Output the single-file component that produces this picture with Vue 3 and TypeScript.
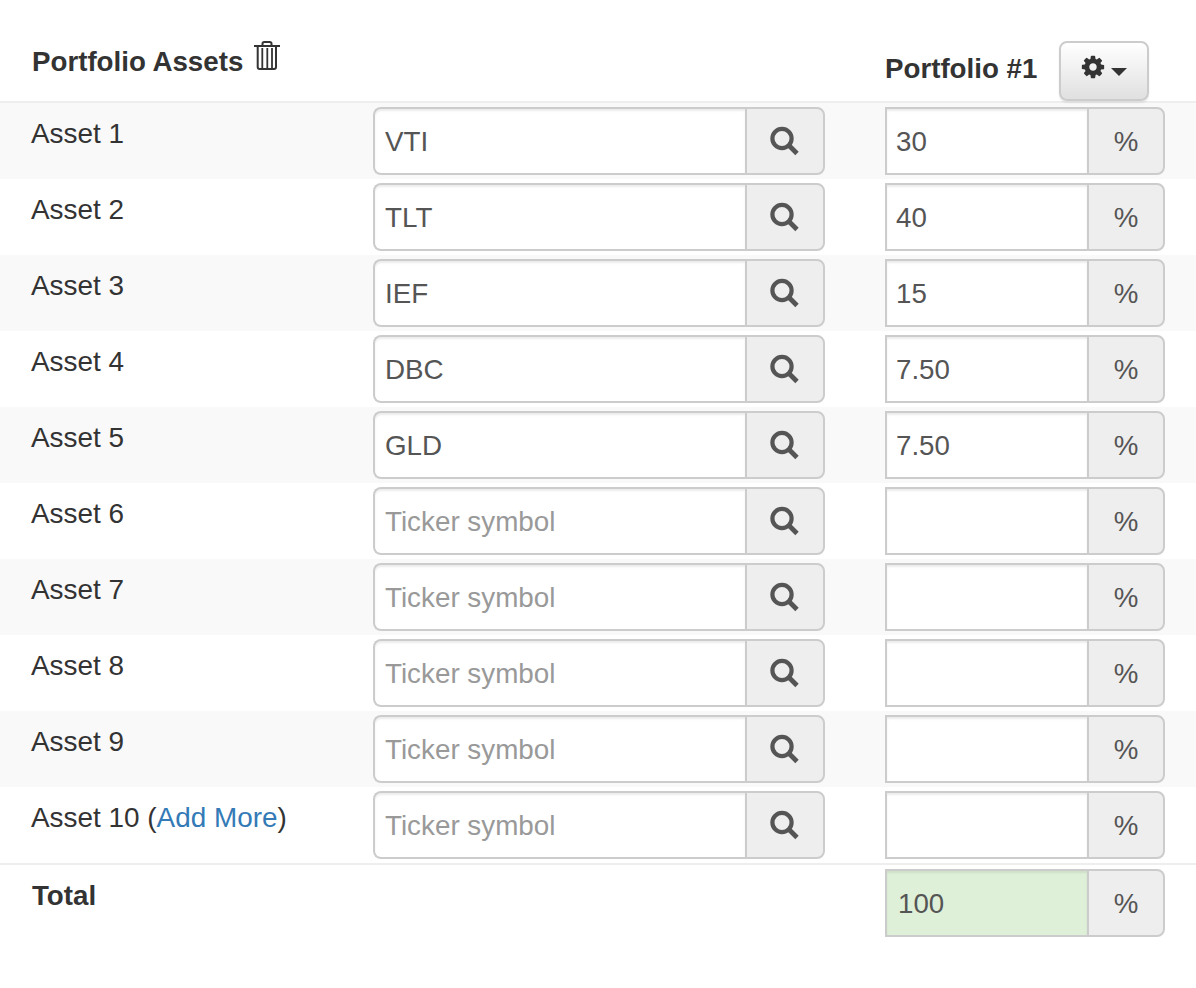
<script setup lang="ts">
interface Row { label: string; ticker: string; weight: string }
const values: [string, string][] = [
  ['VTI', '30'], ['TLT', '40'], ['IEF', '15'], ['DBC', '7.50'], ['GLD', '7.50'],
  ['', ''], ['', ''], ['', ''], ['', ''], ['', ''],
]
const rows: Row[] = values.map((v, i) => ({ label: `Asset ${i + 1}`, ticker: v[0], weight: v[1] }))
</script>

<template>
  <div class="page">
    <div class="head grid">
      <div class="title">
        <span class="ttext">Portfolio Assets</span>
        <svg class="trash" viewBox="0 0 26 30" width="26" height="30" aria-hidden="true">
          <g fill="none" stroke="#333" stroke-width="2">
            <path d="M0 5h26" />
            <path d="M8.500 5V2.800Q8.500 1 10.300 1h5.400q1.800 0 1.800 1.800V5" />
            <path d="M3.700 6v20q0 2 2 2h14.300q2 0 2-2V6" />
            <path d="M8.300 7v20M13.300 7v20M18 7v20" stroke-width="1.800" />
          </g>
        </svg>
      </div>
      <div></div>
      <div></div>
      <div class="portfolio">
        <span class="pname">Portfolio #1</span>
        <button class="cog" type="button" aria-label="Settings">
          <svg class="gear" viewBox="0 0 1792 1792" width="26" height="26" aria-hidden="true">
            <path fill="#333" fill-rule="evenodd" d="M1152 896q0-106-75-181t-181-75-181 75-75 181 75 181 181 75 181-75 75-181zm512-109v222q0 12-8 23t-20 13l-185 28q-19 54-39 91 35 50 107 138 10 12 10 25t-9 23q-27 37-99 108t-94 71q-12 0-26-9l-138-108q-44 23-91 38-16 136-29 186-7 28-36 28h-222q-14 0-24.500-8.500t-11.500-21.500l-28-184q-49-16-90-37l-141 107q-10 9-25 9-14 0-25-11-126-114-165-168-7-10-7-23 0-12 8-23 15-21 51-66.500t54-70.500q-27-50-41-99l-183-27q-13-2-21-12.500t-8-23.500v-222q0-12 8-23t19-13l186-28q14-46 39-92-40-57-107-138-10-12-10-24 0-10 9-23 26-36 98.500-107.500t94.500-71.500q13 0 26 10l138 107q44-23 91-38 16-136 29-186 7-28 36-28h222q14 0 24.500 8.500t11.500 21.500l28 184q49 16 90 37l142-107q9-9 24-9 13 0 25 10 129 119 165 170 7 8 7 22 0 12-8 23-15 21-51 66.500t-54 70.500q26 50 41 98l183 28q13 2 21 12.500t8 23.500z" />
          </svg>
          <span class="caret"></span>
        </button>
      </div>
    </div>

    <div v-for="(r, i) in rows" :key="r.label" class="row grid" :class="{ odd: i % 2 === 0 }">
      <div class="label">
        {{ r.label }}
        <template v-if="i === 9">(<a class="more" href="#">Add More</a>)</template>
      </div>
      <div class="group">
        <input class="field ticker" type="text" placeholder="Ticker symbol" :value="r.ticker" />
        <span class="addon search">
          <svg viewBox="0 0 30 30" width="30" height="30" aria-hidden="true">
            <circle cx="12" cy="12.500" r="9.600" fill="none" stroke="#555" stroke-width="4.200" />
            <path d="M19 19.500l8 8" fill="none" stroke="#555" stroke-width="4.800" />
          </svg>
        </span>
      </div>
      <div></div>
      <div class="group">
        <input class="field weight" type="text" :value="r.weight" />
        <span class="addon pct">%</span>
      </div>
    </div>

    <div class="total grid">
      <div class="label strong">Total</div>
      <div></div>
      <div></div>
      <div class="group">
        <input class="field weight sum" type="text" value="100" />
        <span class="addon pct">%</span>
      </div>
    </div>
  </div>
</template>

<style>
html, body { background: #fff; }
</style>

<style scoped>
.page {
  width: 1196px;
  height: 988px;
  font-family: "Liberation Sans", Arial, sans-serif;
  font-size: 27.7px;
  color: #333;
  overflow: hidden;
}
.grid {
  display: grid;
  grid-template-columns: 373px 452px 60px 280px 31px;
}
.head {
  height: 103px;
  box-sizing: border-box;
  border-bottom: 2px solid #eee;
}
.title {
  padding: 41px 0 0 32px;
  font-weight: 700;
  display: flex;
  align-items: flex-start;
  gap: 11px;
  white-space: nowrap;
}
.ttext { line-height: 40px; padding-top: 1px; }
.portfolio {
  position: relative;
  font-weight: 700;
  padding-top: 49px;
  line-height: 40px;
  white-space: nowrap;
}
.cog {
  position: absolute;
  left: 174px;
  top: 41px;
  width: 90px;
  height: 60px;
  box-sizing: border-box;
  border: 2px solid #ccc;
  border-radius: 8px;
  background: linear-gradient(to bottom, #fff 0%, #e0e0e0 100%);
  box-shadow: inset 0 2px 0 rgba(255, 255, 255, 0.15), 0 2px 2px rgba(0, 0, 0, 0.075);
  padding: 0;
  display: flex;
  align-items: center;
  justify-content: center;
  gap: 5px;
}
.gear { margin: -8px 0 0 -1px; }
.caret {
  width: 0;
  height: 0;
  margin-top: 2px;
  border-top: 8px solid #333;
  border-left: 8px solid transparent;
  border-right: 8px solid transparent;
}
.row {
  height: 76px;
  box-sizing: border-box;
  padding-top: 4px;
}
.odd { background: #f9f9f9; }
.label {
  padding: 7px 0 0 31px;
  line-height: 40px;
  font-size: 27.9px;
  white-space: nowrap;
}
.more { color: #337ab7; text-decoration: none; }
.strong { font-weight: 700; padding-left: 32px; font-size: 27.7px; }
.group { display: flex; height: 68px; }
.field {
  flex: 1;
  min-width: 0;
  box-sizing: border-box;
  height: 68px;
  margin: 0;
  padding: 2px 10px 0;
  border: 2px solid #ccc;
  border-right: 0;
  outline: 0;
  background: #fff;
  color: #555;
  font: inherit;
  box-shadow: inset 0 2px 2px rgba(0, 0, 0, 0.075);
}
.field::placeholder { color: #999; opacity: 1; }
.ticker { border-radius: 8px 0 0 8px; font-size: 27.8px; }
.weight { border-radius: 0; padding-left: 9px; }
.sum { background: #dff0d8; padding-left: 11px; }
.addon {
  box-sizing: border-box;
  height: 68px;
  padding-top: 2px;
  display: flex;
  align-items: center;
  justify-content: center;
  border: 2px solid #ccc;
  border-radius: 0 8px 8px 0;
  background: #eee;
  color: #555;
}
.search { width: 80px; padding-top: 0; }
.pct { width: 78px; }
.total {
  height: 125px;
  box-sizing: border-box;
  padding-top: 4px;
  border-top: 2px solid #eee;
}
.total .label { padding-top: 7px; }
</style>
